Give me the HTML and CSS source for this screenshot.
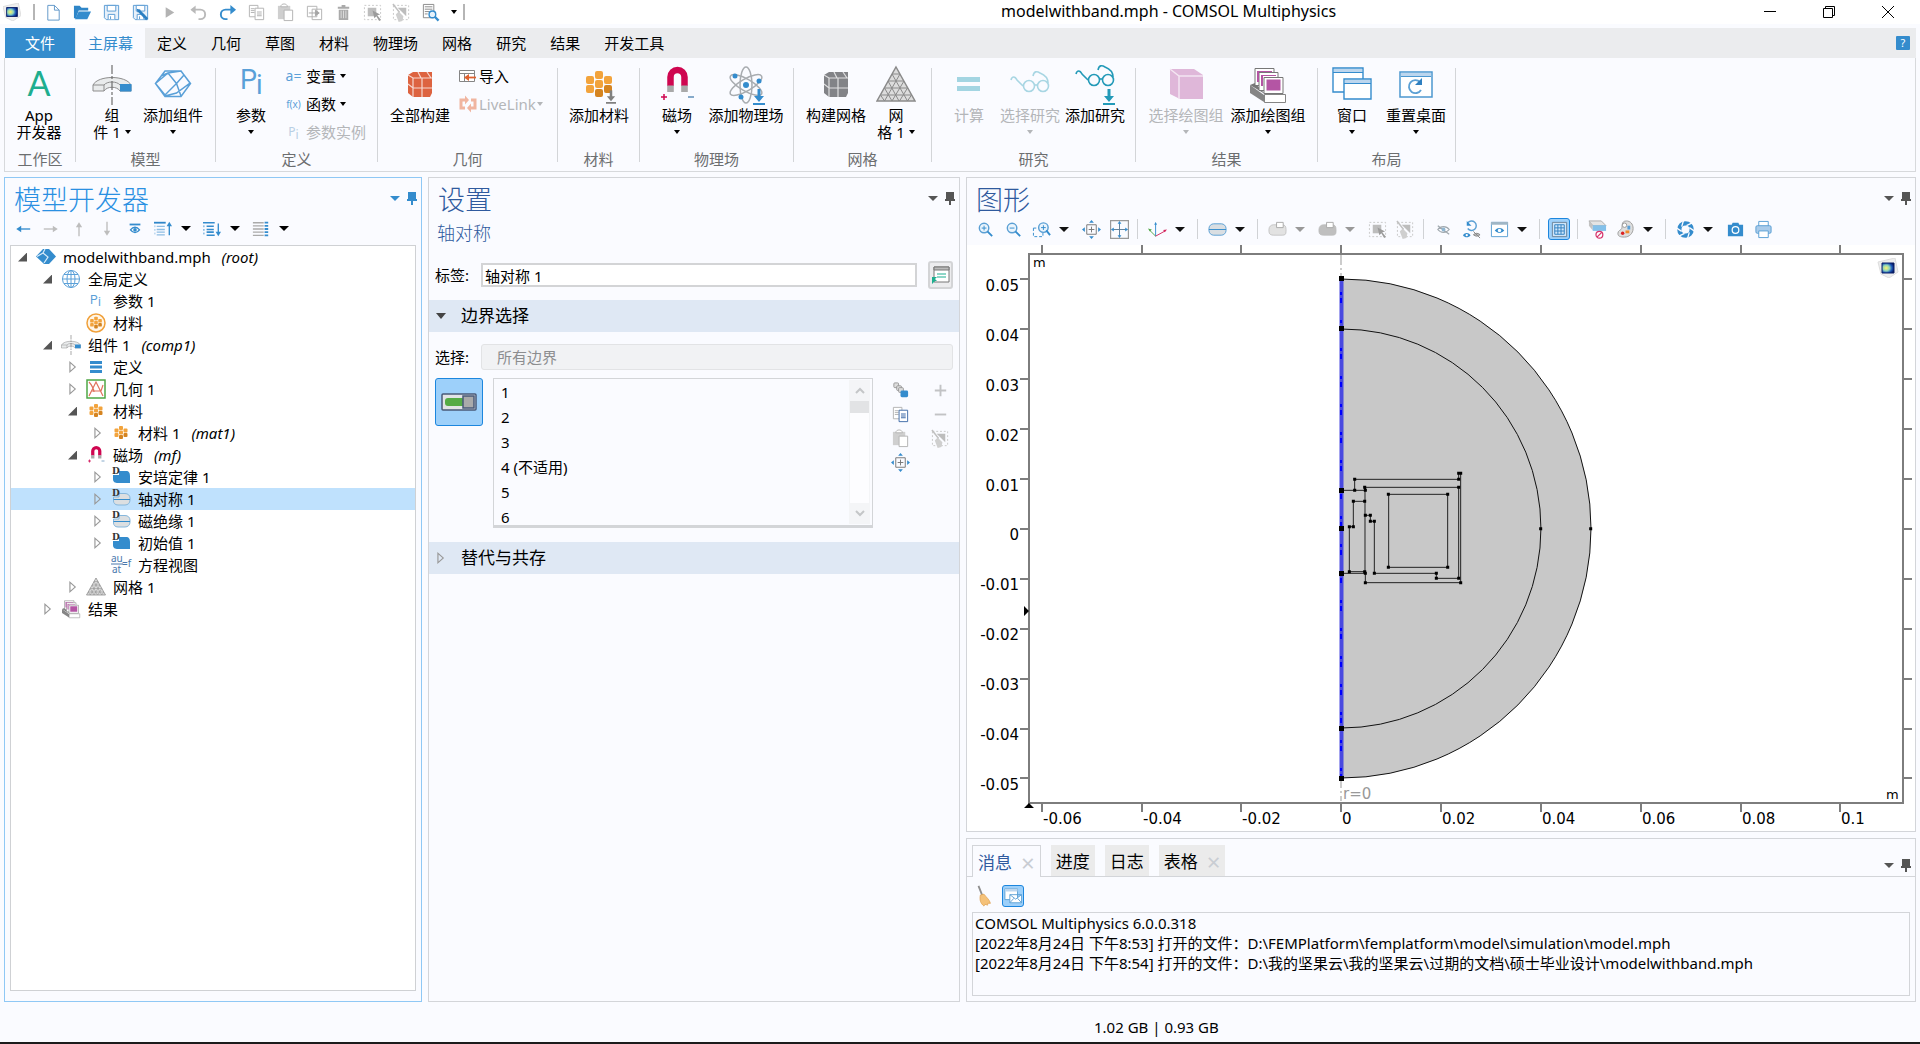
FILE: index.html
```html
<!DOCTYPE html>
<html lang="zh-CN">
<head>
<meta charset="utf-8">
<title>modelwithband.mph - COMSOL Multiphysics</title>
<meta name="viewport" content="width=device-width, initial-scale=1">
<link rel="stylesheet" href="styles.css">
</head>
<body>
<svg class="sprite" aria-hidden="true">
  <defs>
    <radialGradient id="lg" cx=".35" cy=".5" r=".7"><stop offset="0" stop-color="#fff36a"/><stop offset=".4" stop-color="#8fd4b8"/><stop offset=".7" stop-color="#1c56b8"/><stop offset="1" stop-color="#04145c"/></radialGradient>
  </defs>
  <symbol id="logo" viewBox="0 0 20 20"><path d="M0 4l17-4 3 14-9 6-8-4z" fill="#eee" stroke="#ddd"/><path d="M4 5h12v10H4z" fill="url(#lg)" stroke="#0a1f66"/></symbol>
  <symbol id="new" viewBox="0 0 20 20"><path d="M4 2.500h7l5 5v10.500h-12zM11 2.500v5h5" fill="#fff" stroke="#5f97c8"/></symbol>
  <symbol id="open" viewBox="0 0 20 20"><path d="M1 3h6l2 2h7v3H6L3 16H1z" fill="#2f86c8"/><path d="M6 9h13l-4 8H2z" fill="#348ccd"/></symbol>
  <symbol id="save" viewBox="0 0 20 20"><path d="M2.500 2.500h15v15H4.500l-2-2z" fill="#e8f1fa" stroke="#5a9bd4"/><path d="M5.500 2.500h9v6h-9zM6.500 17v-5h7v5M9 14v3" fill="#fff" stroke="#5a9bd4"/></symbol>
  <symbol id="saveas" viewBox="0 0 20 20"><use href="#save"/><path d="M8 8l9 9" stroke="#2b7fc2" stroke-width="3"/><path d="M6 6l4 1-3 3z" fill="#2b7fc2"/></symbol>
  <symbol id="play" viewBox="0 0 20 20"><path d="M6 4.500l9 5.500-9 5.500z" fill="#b3b3b3"/></symbol>
  <symbol id="undo" viewBox="0 0 20 20"><path d="M3 7h9a5 5 0 010 10H10" fill="none" stroke="#b9b9b9" stroke-width="2"/><path d="M7 2.500v9L1.500 7z" fill="#b9b9b9"/></symbol>
  <symbol id="redo" viewBox="0 0 20 20"><path d="M17 7H8a5 5 0 000 10h2" fill="none" stroke="#348ccd" stroke-width="2"/><path d="M13 2v10l6-5z" fill="#348ccd"/></symbol>
  <symbol id="copy" viewBox="0 0 20 20"><path d="M2.500 2.500h9v12h-9z" fill="#fff" stroke="#b3b3b3"/><path d="M4 6h4M4 8h4M4 10h4" stroke="#b3b3b3"/><path d="M8.500 5.500h9v12h-9z" fill="#fff" stroke="currentColor"/><path d="M10.500 9h5v1h-5zM10.500 11h5v1h-5zM10.500 13h5v1h-5z" fill="currentColor"/></symbol>
  <symbol id="paste" viewBox="0 0 20 20"><path d="M2 3h13v14H2z" fill="#cfcfcf"/><path d="M5 4c0-4 7-4 7 0z" fill="#fff" stroke="#b3b3b3"/><path d="M8.500 7.500h9v11h-9z" fill="#fff" stroke="#b3b3b3"/></symbol>
  <symbol id="dup" viewBox="0 0 20 20"><path d="M2.500 3.500h10v11h-10zM7.500 6.500h10v11h-10z" fill="#fff" stroke="#b3b3b3"/><path d="M4 10.500h9M11 7.500l4 3-4 3z" fill="#a5a5a5" stroke="#a5a5a5"/></symbol>
  <symbol id="del" viewBox="0 0 20 20"><path d="M4 4h12v2H4zM8 2h4v2H8zM5 7h10v11H5z" fill="#aaa"/><path d="M7.500 8v8M10 8v8M12.500 8v8" stroke="#ddd"/></symbol>
  <symbol id="sel" viewBox="0 0 20 20"><path d="M1.500 2.500h17v15h-17z" fill="none" stroke="#c8c8c8" stroke-dasharray="2 2"/><path d="M5 5h9v9H5z" fill="#bdbdbd"/><path d="M10 8l8 4-3 1 4 5-2 1-3-5-2 2z" fill="#9c9c9c"/></symbol>
  <symbol id="clr" viewBox="0 0 20 20"><path d="M1.500 2.500h16v15h-16z" fill="none" stroke="#c8c8c8" stroke-dasharray="2 2"/><path d="M6 5h9v9z" fill="#bdbdbd"/><path d="M1 1l7 9" stroke="#c0c0c0" stroke-width="1.500"/><path d="M7 9l5 5-1 5-4 1-3-8z" fill="#cfcfcf"/></symbol>
  <symbol id="find" viewBox="0 0 20 20"><path d="M2.500 1.500h11v14h-11z" fill="#fff" stroke="#8a8a8a"/><path d="M4 4h8M4 6.500h8M4 9h5M4 11.500h3" stroke="#8a8a8a"/><circle cx="12" cy="12" r="3.500" fill="#e6f2fb" stroke="#348ccd" stroke-width="1.500"/><path d="M14.500 14.500l4 4" stroke="#348ccd" stroke-width="2.500"/></symbol>
  <symbol id="pin" viewBox="0 0 12 14"><path d="M2 1h8v7h1v2H7v4H5v-4H1V8h1z" fill="currentColor"/></symbol>

  <symbol id="comp" viewBox="0 0 40 40"><path d="M1 26v-6C6 10 34 10 39 20v6H28c-3-5-13-5-16 0z" fill="#e9ebec" stroke="#8d8d8d"/><path d="M1 20h11c3-4 13-4 16 0M12 20v6" fill="none" stroke="#8d8d8d"/><path d="M28 19h11.500v7.500H28z" fill="#348ccd"/><path d="M20 0v40" stroke="#6e6e6e" stroke-width="1.200" stroke-dasharray="9 2 3 2"/></symbol>
  <symbol id="cubeo" viewBox="0 0 40 40"><path d="M2.500 18.500L12 6h16l9.500 12.500L28 31.500H12zM2.500 18.500L12 30L23.500 18.500L15 8zM15 8L28 6M23.500 18.500L28 31M28 6L37 18L23.500 28L12 31M15 8L8 11M23.500 18.500L31 10" fill="none" stroke="#5aa0d8" stroke-width="1.500"/></symbol>
  <symbol id="cube" viewBox="0 0 40 40"><path d="M8 10l5-3h19v21l-2 4H13l-5-4z" fill="currentColor"/><path d="M8 10l5 3h19M13 13v19M8 19l5 4h19M22 13v19M18 7l3 6M27 7l4 6" fill="none" stroke="#fff" stroke-opacity=".75" stroke-width="1.200"/></symbol>
  <symbol id="mat" viewBox="0 0 40 40"><g fill="#f2a33c"><rect x="7" y="11" width="8" height="8" rx="2"/><rect x="16" y="6" width="8" height="8" rx="2"/><rect x="25" y="11" width="8" height="8" rx="2"/><rect x="7" y="20" width="8" height="8" rx="2"/><rect x="16" y="15" width="8" height="8" rx="2"/></g><g fill="#d58420"><rect x="16" y="24" width="8" height="8" rx="2"/><rect x="25" y="20" width="8" height="8" rx="2"/></g></symbol>
  <symbol id="down" viewBox="0 0 12 16"><path d="M6 0v9" stroke="currentColor" stroke-width="3"/><path d="M1 7h10l-5 6zM0 14h12v2H0z" fill="currentColor"/></symbol>
  <symbol id="mag" viewBox="0 0 40 40"><path d="M13.500 21V12a7 7 0 0114 0v9" fill="none" stroke="#cf0650" stroke-width="6.500"/><path d="M10.200 20.500h6.600V27h-6.600zM24.200 20.500h6.600V27h-6.600z" fill="#a9a9a9"/><path d="M4 32h6M7 29v6" stroke="#cf0650" stroke-width="1.500"/><path d="M31 32h6" stroke="#5f8fb8" stroke-width="1.500"/></symbol>
  <symbol id="atom" viewBox="0 0 40 40"><g fill="none" stroke="#a8acb0" stroke-width="1.500"><ellipse cx="20" cy="20" rx="6" ry="18"/><ellipse cx="20" cy="20" rx="6" ry="18" transform="rotate(60 20 20)"/><ellipse cx="20" cy="20" rx="6" ry="18" transform="rotate(120 20 20)"/></g><g fill="#348ccd"><circle cx="20" cy="20" r="3"/><circle cx="9" cy="11" r="2.500"/><circle cx="33" cy="16" r="2.500"/><circle cx="15" cy="32" r="2.500"/></g></symbol>
  <symbol id="tri" viewBox="0 0 40 40"><path d="M20 2L39 36H1z" fill="#dcdcdc" stroke="#8a8a8a" stroke-width="1.500"/><path d="M16 9h8M12 16h16M8.500 23h23M4.500 30h31M16 9l15.500 27M12 16l11 20M8.500 23L16 36M4.500 30l4 6M24 9L8.500 36M28 16L16 36M31.500 23l-8 13M35.500 30l-4 6" fill="none" stroke="#8a8a8a" stroke-width="1"/></symbol>
  <symbol id="eq" viewBox="0 0 40 40"><path d="M8 12h23v5H8zM8 21h23v5H8z" fill="#a3d5e2"/></symbol>
  <symbol id="glass" viewBox="0 0 40 40"><g fill="none" stroke="currentColor" stroke-width="1.600"><path d="M1 12c1-4 4-4 6 0l6 6M23 8c1-5 4-5 7-3 5 2 8 5 8 10"/><circle cx="19" cy="18" r="5.500"/><circle cx="33" cy="18" r="5.500"/><path d="M24.500 17h3"/></g></symbol>
  <symbol id="box" viewBox="0 0 40 40"><path d="M4 4h24l9 6v24H14L4 29z" fill="#dfb7d9"/><path d="M4 4l9 7h24M13 11v23" fill="none" stroke="#f4e6f2" stroke-width="1.500"/></symbol>
  <symbol id="plots" viewBox="0 0 40 40"><path d="M2 20l14 10v7L2 28z" fill="#858585"/><path d="M2 20l5-2 10 11z" fill="#777"/><g stroke="#777" fill="#fff"><path d="M7 3.500h19v17H7z"/><path d="M11 7.500h19v18H11z"/><path d="M16 12.500h19v16H16z"/></g><path d="M9 6h15v1H11v10H9zM13 10h15v1H15v10h-2zM18.500 14.500h14v11h-14z" fill="#b455a4"/><path d="M16.500 29.500h21v8h-21z" fill="#fff" stroke="#858585"/></symbol>
  <symbol id="wins" viewBox="0 0 40 40"><g fill="#fff" stroke="#348ccd" stroke-width="1.400"><path d="M1 3h30v24H1z"/><path d="M12 14h27v20H12z"/></g><path d="M2 4h28v3H2zM13 15h25v3H13z" fill="#bcd6ee"/><path d="M1 7.500h30M12 18.500h27" stroke="#348ccd"/></symbol>
  <symbol id="reset" viewBox="0 0 40 40"><path d="M4 7h32v25H4z" fill="#fff" stroke="#4c98d0" stroke-width="1.500"/><path d="M5 8h30v3H5z" fill="#bcd6ee"/><path d="M5 11.500h30" stroke="#4c98d0"/><path d="M25 25a6.500 6.500 0 11-1-8" fill="none" stroke="#5a9fd4" stroke-width="1.800"/><path d="M26 13v7h-7z" fill="#2f80c0"/></symbol>
  <symbol id="import" viewBox="0 0 20 20"><path d="M1.500 4.500h15v11h-15zM1.500 7.500h15M6.500 7v8" fill="#fff" stroke="#858585"/><path d="M9 11.500h9" stroke="#e0622f" stroke-width="1.800"/><path d="M11 8v7l-5-3.500z" fill="#e0622f"/></symbol>
  <symbol id="link" viewBox="0 0 20 20"><path d="M8 6H3v8h4M12 14h5V6h-4" fill="none" stroke="#f0b5a0" stroke-width="3"/><path d="M7 1.500v9L11 6zM13 9.500v9L9 14z" fill="#f0b5a0"/></symbol>

  <symbol id="left" viewBox="0 0 20 20"><path d="M5 10h13" stroke="currentColor" stroke-width="1.500"/><path d="M8 6.500v7L2.500 10z" fill="currentColor"/></symbol>
  <symbol id="eye" viewBox="0 0 20 20"><path d="M4 5h12" stroke="#348ccd" stroke-width="2"/><path d="M5 11c3-4 7-4 10 0-3 4-7 4-10 0z" fill="#fff" stroke="#348ccd" stroke-width="1.500"/><circle cx="10" cy="11" r="2" fill="#348ccd"/></symbol>
  <symbol id="expand" viewBox="0 0 20 20"><path d="M0 3h13" stroke="#2f86c8" stroke-width="2"/><path d="M3 7h9M3 10.500h9M3 13.500h9M3 16.500h9" stroke="#8dbde3" stroke-width="1.500"/><path d="M1 6v12" stroke="#8dbde3" stroke-dasharray="2 2"/><path d="M17 5v12" stroke="#348ccd" stroke-width="1.500"/><path d="M14 7l3-5 3 5z" fill="#348ccd"/></symbol>
  <symbol id="coll" viewBox="0 0 20 20"><path d="M0 3h13M4 7h8M4 10.500h8M4 13.500h8M4 17h9" stroke="#348ccd" stroke-width="1.800"/><path d="M1 6v12" stroke="#348ccd" stroke-dasharray="2 2"/><path d="M17 4v11" stroke="#348ccd" stroke-width="1.500"/><path d="M14 13l3 5 3-5z" fill="#348ccd"/></symbol>
  <symbol id="cols" viewBox="0 0 20 20"><path d="M1 3h12M1 6.500h12M1 10h12M1 13.500h12M1 17h12" stroke="#aaa" stroke-width="1.500"/><path d="M14 3h4M14 6.500h4M14 10h4M14 13.500h4M14 17h4" stroke="#348ccd" stroke-width="2"/></symbol>

  <symbol id="root" viewBox="0 0 20 20"><path d="M0 9.500L7 2h6l7 7.500L13 17H8z" fill="#348ccd"/><path d="M1 9.500l6-3.500 5 4-4 6M7 6l2-4" fill="none" stroke="#d9ecfa" stroke-width="1.200"/></symbol>
  <symbol id="globe" viewBox="0 0 20 20"><g fill="none" stroke="#5aa0d8"><circle cx="10" cy="10" r="8.500"/><ellipse cx="10" cy="10" rx="4" ry="8.500"/><path d="M1.500 10h17M10 1.500v17M3 5.500h14M3 14.500h14"/></g></symbol>
  <symbol id="matc" viewBox="0 0 20 20"><circle cx="10" cy="10" r="9" fill="#fff6e8" stroke="#f0a03a" stroke-width="1.500"/><use href="#mat" x="1" y="1" width="18" height="18"/></symbol>
  <symbol id="defs" viewBox="0 0 20 20"><path d="M4 4h12v3H4zM4 8.500h12v3H4zM4 13h12v3H4z" fill="#348ccd"/></symbol>
  <symbol id="geom" viewBox="0 0 20 20"><path d="M1 1h18v18H1z" fill="#fff" stroke="#4fa845" stroke-width="1.500"/><path d="M3 3c3 3 5 8 5 10M3 17L10 3l7 14M5 12h10l2-6" fill="none" stroke="#e0705c" stroke-width="1.200"/></symbol>
  <symbol id="dom" viewBox="0 0 20 20"><path d="M2 8h6V4h7c3 0 4 2 4 5v7H7c-3 0-5-1-5-4z" fill="#348ccd"/></symbol>
  <symbol id="bnd" viewBox="0 0 20 20"><path d="M2.500 8H8V4.500h6c3 0 5 2 5 4.500v2c0 3-2 5-5 5H7c-3 0-4.500-2-4.500-4z" fill="#dcdfe1" stroke="#86b7dc"/><path d="M2.500 10.500H19" stroke="#348ccd"/></symbol>

  <symbol id="zin" viewBox="0 0 20 20"><circle cx="8.500" cy="8.500" r="5" fill="#eaf4fc" stroke="#5a9fd4" stroke-width="1.500"/><path d="M12 12l5 5" stroke="#348ccd" stroke-width="2"/><path d="M6 8.500h5M8.500 6v5" stroke="#348ccd"/></symbol>
  <symbol id="zout" viewBox="0 0 20 20"><circle cx="8.500" cy="8.500" r="5" fill="#eaf4fc" stroke="#5a9fd4" stroke-width="1.500"/><path d="M12 12l5 5" stroke="#348ccd" stroke-width="2"/><path d="M6 8.500h5" stroke="#348ccd"/></symbol>
  <symbol id="zbox" viewBox="0 0 20 20"><path d="M1.500 8.500h10v9h-10z" fill="none" stroke="#348ccd" stroke-dasharray="3 2"/><circle cx="12" cy="8" r="5" fill="#eaf4fc" stroke="#5a9fd4" stroke-width="1.500"/><path d="M15 11l4 5" stroke="#348ccd" stroke-width="2"/><path d="M9.500 8h5M12 5.500v5" stroke="#348ccd"/></symbol>
  <symbol id="fit" viewBox="0 0 20 20"><path d="M5 5h10v10H5zM7 10h6M10 7v6" fill="none" stroke="#777"/><path d="M7.500 3L10 0 12.500 3zM7.500 17l2.500 3 2.500-3zM3 7.500L0 10 3 12.500zM17 7.500l3 2.500-3 2.500z" fill="#348ccd"/></symbol>
  <symbol id="ext" viewBox="0 0 20 20"><path d="M.5.5h19v19H.5z" fill="none" stroke="#999" stroke-width="1.500"/><path d="M2 10h16M10 2v16" stroke="#5c7c98"/><path d="M8 4l2-3 2 3zM8 16l2 3 2-3zM4 8l-3 2 3 2zM16 8l3 2-3 2z" fill="#348ccd"/></symbol>
  <symbol id="axes" viewBox="0 0 20 20"><path d="M8 17V3" stroke="#348ccd"/><path d="M8 17L1 10" stroke="#51a747"/><path d="M8 17l11-6" stroke="#d4275e"/><path d="M6.500 5L8 2l1.500 3z" fill="#348ccd"/><path d="M0 9l4 1-2 2z" fill="#51a747"/><path d="M20 10l-4 .5 1.500 2.500z" fill="#d4275e"/></symbol>
  <symbol id="slab" viewBox="0 0 20 20"><rect x="1" y="4" width="18" height="12" rx="5" fill="#d9dee2" stroke="#5a9fd4"/><path d="M1 10h18" stroke="#348ccd"/></symbol>
  <symbol id="prt" viewBox="0 0 20 20"><path d="M1 10c0-3 2-5 5-5h9c3 0 4 2 4 5v2c0 3-1 4-4 4H6c-3 0-5-1-5-4z" fill="currentColor" stroke="#bbb" stroke-width=".8"/><path d="M9 2.500h7V8H9z" fill="#fff" stroke="#aaa"/></symbol>
  <symbol id="hide" viewBox="0 0 20 20"><path d="M4 10c3-4 9-4 12 0-3 4-9 4-12 0zM4 6l12 9" fill="none" stroke="#a0a8ae" stroke-width="1.300"/><circle cx="10" cy="10" r="2" fill="#8fb5d0"/></symbol>
  <symbol id="rst" viewBox="0 0 20 20"><path d="M6 3a5 5 0 110 6" fill="none" stroke="#5a9fd4" stroke-width="1.500"/><path d="M5 1v5h5z" fill="#348ccd"/><path d="M1 16c2-3 6-3 8 0-2 3-6 3-8 0z" fill="#348ccd"/><circle cx="5" cy="16" r="1.200" fill="#fff"/><path d="M12 15.500c2-2 5-2 7 0-2 2-5 2-7 0zM12 12l7 7" fill="#bbb" stroke="#888"/></symbol>
  <symbol id="vis" viewBox="0 0 20 20"><path d="M1.500 2.500h17v15h-17z" fill="#fff" stroke="#5a9fd4"/><path d="M1 2h18v3H1z" fill="#9fb6c6"/><path d="M5 11c3-3.500 7-3.500 10 0-3 3.500-7 3.500-10 0z" fill="#348ccd"/><circle cx="10" cy="11" r="1.800" fill="#fff"/></symbol>
  <symbol id="grid" viewBox="0 0 20 20"><path d="M2.500 2.500h15v15h-15z" fill="#cfe6fa" stroke="#6c8499"/><path d="M5 5h10v10H5zM8.300 5v10M11.600 5v10M5 8.300h10M5 11.600h10" fill="none" stroke="#2f80c0"/></symbol>
  <symbol id="trans" viewBox="0 0 20 20"><path d="M1 1h13l5 5H5z" fill="#e4e4e4" stroke="#aaa"/><path d="M1 1l4 4v6L1 6z" fill="#c3c3c3"/><path d="M5 5.500h14v6H5z" fill="#83c0ea"/><circle cx="12" cy="15.500" r="3.600" fill="#fff" stroke="#d6336c" stroke-width="1.300"/><path d="M9.500 18l5-5" stroke="#d6336c" stroke-width="1.300"/></symbol>
  <symbol id="pal" viewBox="0 0 20 20"><path d="M11 1c4 0 7 3 7 8s-4 9-9 9-7-1-7-4 3-3 4-5-1-8 5-8z" fill="#dedede" stroke="#9c9c9c"/><circle cx="9" cy="5.500" r="2.300" fill="#fff" stroke="#999"/><path d="M12 6h3v4h-3z" fill="#5aa0d8"/><path d="M10 11h4v3h-4z" fill="#f08a2c"/><circle cx="7" cy="14" r="1.800" fill="#d22"/></symbol>
  <symbol id="shut" viewBox="0 0 20 20"><circle cx="10" cy="10" r="6.500" fill="none" stroke="#348ccd" stroke-width="4.500"/><path d="M8 0l-2 7M17 3l-6 3M20 12l-6-4M12 20l2-7M3 17l6-3M0 8l6 4" stroke="#fafbff" stroke-width="1.400"/></symbol>
  <symbol id="cam" viewBox="0 0 20 20"><path d="M2 5h4l1-2h6l1 2h4v12H2z" fill="#348ccd"/><circle cx="10" cy="10.500" r="3.500" fill="none" stroke="#fff" stroke-width="1.300"/></symbol>
  <symbol id="print" viewBox="0 0 20 20"><path d="M5 1.500h10V7H5z" fill="#fff" stroke="#5a9fd4"/><rect x="2" y="6" width="16" height="8" rx="1.500" fill="#a9cbea" stroke="#5a9fd4"/><path d="M5 11.500h10v7H5z" fill="#fff" stroke="#5a9fd4"/></symbol>

  <symbol id="report" viewBox="0 0 20 20"><path d="M3 2h15v15H3z" fill="#fff" stroke="#777"/><path d="M3 2h15v3H3z" fill="#bbb" stroke="#777"/><path d="M6 9h9M6 12h9" stroke="#1fae8f" stroke-width="1.200"/><path d="M1 19v-7h5L4 14l2 2-2 0z" fill="#1fae8f"/></symbol>
  <symbol id="switch" viewBox="0 0 36 20"><rect x="1" y="2" width="34" height="16" rx="1" fill="#e1e4e6" stroke="#4a5a78" stroke-width="1.500"/><rect x="4" y="6" width="20" height="8" rx="3" fill="#55ab45"/><rect x="22" y="4" width="11" height="12" fill="#aaa" stroke="#4a5a78" stroke-width="1.500"/></symbol>
  <symbol id="chain" viewBox="0 0 20 20"><g fill="#ddd" stroke="#999"><rect x="3" y="2" width="5" height="5" rx="1"/><rect x="6" y="5" width="5" height="5" rx="1"/><rect x="8" y="7" width="5" height="5" rx="1"/></g><rect x="10" y="10" width="8" height="7" rx="1.500" fill="#348ccd"/></symbol>
  <symbol id="broom" viewBox="0 0 20 24"><path d="M4 1l4 10" stroke="#8f8f8f" stroke-width="2"/><path d="M6 11l4-1c3 4 6 6 7 10l-3 0 0 2-3-1-1 2c-4-3-5-7-4-12z" fill="#f5c27a" stroke="#e0a050" stroke-width=".8"/></symbol>
  <symbol id="mail" viewBox="0 0 20 20"><path d="M1 2h14v12H1z" fill="#fff" stroke="#5a9fd4"/><path d="M1 2h14v3H1z" fill="#bcd6ee"/><path d="M6.500 8.500h13v9h-13zM6.500 8.500l6.500 5 6.500-5M6.500 17.500l4.500-5M19.500 17.500l-4.500-5" fill="#fff" stroke="#5a9fd4"/></symbol>
</svg>

<header class="titlebar">
  <svg class="logo"><use href="#logo"/></svg>
  <span class="tsep"></span>
  <div class="quick">
    <button aria-label="新建"><svg><use href="#new"/></svg></button>
    <button aria-label="打开"><svg><use href="#open"/></svg></button>
    <button aria-label="保存"><svg><use href="#save"/></svg></button>
    <button aria-label="另存为"><svg><use href="#saveas"/></svg></button>
    <button aria-label="运行"><svg><use href="#play"/></svg></button>
    <button aria-label="撤消"><svg><use href="#undo"/></svg></button>
    <button aria-label="重做"><svg><use href="#redo"/></svg></button>
    <button aria-label="复制"><svg><use href="#copy"/></svg></button>
    <button aria-label="粘贴"><svg><use href="#paste"/></svg></button>
    <button aria-label="生成副本"><svg><use href="#dup"/></svg></button>
    <button aria-label="删除"><svg><use href="#del"/></svg></button>
    <button aria-label="选择"><svg><use href="#sel"/></svg></button>
    <button aria-label="清除选择"><svg><use href="#clr"/></svg></button>
    <button aria-label="查找"><svg><use href="#find"/></svg></button>
    <button class="more" aria-label="更多"><i class="caret"></i></button>
  </div>
  <span class="tsep"></span>
  <h1>modelwithband.mph - COMSOL Multiphysics</h1>
  <div class="winctl">
    <button aria-label="最小化"><svg viewBox="0 0 14 14"><path d="M1 6.500h12"/></svg></button>
    <button aria-label="还原"><svg viewBox="0 0 14 14"><path d="M1.500 3.500h9v9h-9zM3.500 3.500v-2h9v9h-2"/></svg></button>
    <button aria-label="关闭"><svg viewBox="0 0 14 14"><path d="M1 1l12 12M13 1L1 13"/></svg></button>
  </div>
</header>

<nav class="tabs">
  <a class="file" href="#">文件</a><a class="on" href="#">主屏幕</a><a href="#">定义</a><a href="#">几何</a><a href="#">草图</a><a href="#">材料</a><a href="#">物理场</a><a href="#">网格</a><a href="#">研究</a><a href="#">结果</a><a href="#">开发工具</a>
  <button class="help" aria-label="帮助">?</button>
</nav>

<section class="ribbon">
  <div class="group g-app"><div class="tools"><button class="big"><svg><text x="20" y="31" text-anchor="middle" class="ic-a">A</text></svg>App<br>开发器</button></div><p>工作区</p></div><i class="sep"></i>
  <div class="group g-model"><div class="tools"><button class="big"><svg><use href="#comp"/></svg>组<br><span class="nb">件 1 <i class="caret"></i></span></button><button class="big w62"><svg><use href="#cubeo"/></svg>添加组件<br><i class="caret"></i></button></div><p>模型</p></div><i class="sep"></i>
  <div class="group g-def"><div class="tools"><button class="big"><svg><text x="9" y="24" class="ic-p">P</text><text x="25" y="29" class="ic-p">i</text></svg>参数<br><i class="caret"></i></button>
    <div class="list"><button><b class="gl">a=</b>变量 <i class="caret"></i></button><button><b class="gl fx">f(x)</b>函数 <i class="caret"></i></button><button disabled><b class="gl"><span>P</span><sub>i</sub></b>参数实例</button></div></div><p>定义</p></div><i class="sep"></i>
  <div class="group g-geo"><div class="tools"><button class="big"><svg class="orange"><use href="#cube"/></svg>全部构建</button>
    <div class="list imp"><button><svg><use href="#import"/></svg>导入</button><button disabled><svg><use href="#link"/></svg>LiveLink <i class="caret"></i></button></div></div><p>几何</p></div><i class="sep"></i>
  <div class="group g-mat"><div class="tools"><button class="big"><svg><use href="#mat"/><use href="#down" class="c-gray" x="27" y="25" width="10" height="14"/></svg>添加材料</button></div><p>材料</p></div><i class="sep"></i>
  <div class="group g-phy"><div class="tools"><button class="big"><svg><use href="#mag"/></svg>磁场<br><i class="caret"></i></button><button class="big w78"><svg><use href="#atom"/><use href="#down" class="c-blue" x="27" y="24" width="12" height="16"/></svg>添加物理场</button></div><p>物理场</p></div><i class="sep"></i>
  <div class="group g-mesh"><div class="tools"><button class="big"><svg class="gray"><use href="#cube"/></svg>构建网格</button><button class="big"><svg><use href="#tri"/></svg>网<br><span class="nb">格 1 <i class="caret"></i></span></button></div><p>网格</p></div><i class="sep"></i>
  <div class="group g-study"><div class="tools"><button class="big" disabled><svg><use href="#eq"/></svg>计算</button><button class="big w62" disabled><svg class="c-pale"><use href="#glass" y="3"/></svg>选择研究<br><i class="caret"></i></button><button class="big w68"><svg class="c-teal"><use href="#glass" y="-3"/><use href="#down" x="28" y="24" width="12" height="16"/></svg>添加研究</button></div><p>研究</p></div><i class="sep"></i>
  <div class="group g-res"><div class="tools"><button class="big w78" disabled><svg><use href="#box"/></svg>选择绘图组<br><i class="caret"></i></button><button class="big w78"><svg><use href="#plots"/></svg>添加绘图组<br><i class="caret"></i></button></div><p>结果</p></div><i class="sep"></i>
  <div class="group g-lay"><div class="tools"><button class="big"><svg><use href="#wins"/></svg>窗口<br><i class="caret"></i></button><button class="big w68"><svg><use href="#reset"/></svg>重置桌面<br><i class="caret"></i></button></div><p>布局</p></div><i class="sep"></i>
</section>

<main>
  <section class="panel model">
    <header><h2>模型开发器</h2><span class="pins"><i class="caret lg"></i><svg><use href="#pin"/></svg></span></header>
    <div class="mtools">
      <button aria-label="后退" class="c-blue"><svg><use href="#left"/></svg></button>
      <button aria-label="前进" class="c-lt"><svg class="r180"><use href="#left"/></svg></button>
      <button aria-label="上移" class="c-lt"><svg class="r90"><use href="#left"/></svg></button>
      <button aria-label="下移" class="c-lt"><svg class="r270"><use href="#left"/></svg></button>
      <button aria-label="显示"><svg><use href="#eye"/></svg></button>
      <button aria-label="展开"><svg><use href="#expand"/></svg></button><button class="dd" aria-label="展开选项"><i class="caret lg"></i></button>
      <button aria-label="折叠"><svg><use href="#coll"/></svg></button><button class="dd" aria-label="折叠选项"><i class="caret lg"></i></button>
      <button aria-label="列"><svg><use href="#cols"/></svg></button><button class="dd" aria-label="列选项"><i class="caret lg"></i></button>
    </div>
    <ul class="tree">
      <li class="l0"><i class="ar open"></i><svg><use href="#root"/></svg>modelwithband.mph <em>(root)</em></li>
      <li class="l1"><i class="ar open"></i><svg><use href="#globe"/></svg>全局定义</li>
      <li class="l2"><i class="ar"></i><svg><text x="4" y="13" class="ic-s">P</text><text x="12" y="15" class="ic-s">i</text></svg>参数 1</li>
      <li class="l2"><i class="ar"></i><svg><use href="#matc"/></svg>材料</li>
      <li class="l1"><i class="ar open"></i><svg><use href="#comp"/></svg>组件 1 <em>(comp1)</em></li>
      <li class="l2"><i class="ar shut"></i><svg><use href="#defs"/></svg>定义</li>
      <li class="l2"><i class="ar shut"></i><svg><use href="#geom"/></svg>几何 1</li>
      <li class="l2"><i class="ar open"></i><svg><use href="#mat"/></svg>材料</li>
      <li class="l3"><i class="ar shut"></i><svg><use href="#mat"/></svg>材料 1 <em>(mat1)</em></li>
      <li class="l2"><i class="ar open"></i><svg><use href="#mag"/></svg>磁场 <em>(mf)</em></li>
      <li class="l3"><i class="ar shut"></i><svg><use href="#dom"/><text x="1" y="7" class="ic-d">D</text></svg>安培定律 1</li>
      <li class="l3 on"><i class="ar shut"></i><svg><use href="#bnd"/><text x="1" y="7" class="ic-d">D</text></svg>轴对称 1</li>
      <li class="l3"><i class="ar shut"></i><svg><use href="#bnd"/><text x="1" y="7" class="ic-d">D</text></svg>磁绝缘 1</li>
      <li class="l3"><i class="ar shut"></i><svg><use href="#dom"/><text x="1" y="7" class="ic-d">D</text></svg>初始值 1</li>
      <li class="l3"><i class="ar"></i><svg><text x="0" y="7" class="ic-e">au</text><path d="M0 9h12" stroke="#4a78ad"/><text x="1" y="18" class="ic-e">at</text><text x="11" y="12" class="ic-e">=f</text></svg>方程视图</li>
      <li class="l2"><i class="ar shut"></i><svg><use href="#tri"/></svg>网格 1</li>
      <li class="l1"><i class="ar shut"></i><svg><use href="#plots"/></svg>结果</li>
    </ul>
  </section>

  <section class="panel settings">
    <header><h2>设置</h2><span class="pins"><i class="caret lg"></i><svg><use href="#pin"/></svg></span></header>
    <h3>轴对称</h3>
    <div class="row name"><label for="lab">标签:</label><input id="lab" type="text" value="轴对称 1"><button class="rep" aria-label="创建"><svg><use href="#report"/></svg></button></div>
    <h4><i class="fold"></i>边界选择</h4>
    <div class="row pick"><label for="bsel">选择:</label><select id="bsel" disabled><option>所有边界</option></select></div>
    <div class="bounds">
      <button class="toggle" aria-label="激活选择" aria-pressed="true"><svg><use href="#switch"/></svg></button>
      <div class="listbox">
        <ul><li>1</li><li>2</li><li>3</li><li>4 (不适用)</li><li>5</li><li>6</li></ul>
        <div class="sbar"><button aria-label="向上滚动"><svg viewBox="0 0 10 6"><path d="M1 5l4-4 4 4"/></svg></button><i class="thumb"></i><button aria-label="向下滚动"><svg viewBox="0 0 10 6"><path d="M1 1l4 4 4-4"/></svg></button></div>
      </div>
      <div class="acts">
        <button aria-label="创建选择"><svg><use href="#chain"/></svg></button><button class="sym" aria-label="添加"><svg viewBox="0 0 20 20"><path d="M4 10h12M10 4v12"/></svg></button>
        <button class="navy" aria-label="复制选择"><svg><use href="#copy"/></svg></button><button class="sym" aria-label="移除"><svg viewBox="0 0 20 20"><path d="M4 10h12"/></svg></button>
        <button aria-label="粘贴选择"><svg><use href="#paste"/></svg></button><button aria-label="清除"><svg><use href="#clr"/></svg></button>
        <button aria-label="缩放到选择"><svg><use href="#fit"/></svg></button>
      </div>
    </div>
    <h4><i class="fold side"></i>替代与共存</h4>
  </section>

  <div class="right">
    <section class="panel graphics">
      <header><h2>图形</h2><span class="pins"><i class="caret lg"></i><svg><use href="#pin"/></svg></span></header>
      <div class="gtools">
        <button aria-label="放大"><svg><use href="#zin"/></svg></button><button aria-label="缩小"><svg><use href="#zout"/></svg></button><button aria-label="框选缩放"><svg><use href="#zbox"/></svg></button><button class="dd" aria-label="缩放选项"><i class="caret lg"></i></button>
        <button aria-label="缩放到选择"><svg><use href="#fit"/></svg></button><button aria-label="缩放到窗口大小"><svg><use href="#ext"/></svg></button><i class="gs"></i>
        <button aria-label="视图"><svg><use href="#axes"/></svg></button><button class="dd" aria-label="视图选项"><i class="caret lg"></i></button><i class="gs"></i>
        <button aria-label="选择边界"><svg><use href="#slab"/></svg></button><button class="dd" aria-label="选择选项"><i class="caret lg"></i></button><i class="gs"></i>
        <button class="c-pr1" aria-label="框选"><svg><use href="#prt"/></svg></button><button class="dd off" aria-label="框选选项"><i class="caret lg"></i></button>
        <button class="c-pr2" aria-label="取消框选"><svg><use href="#prt"/></svg></button><button class="dd off" aria-label="取消选项"><i class="caret lg"></i></button>
        <button aria-label="选择"><svg><use href="#sel"/></svg></button><button aria-label="清除"><svg><use href="#clr"/></svg></button><i class="gs"></i>
        <button aria-label="隐藏"><svg><use href="#hide"/></svg></button><button aria-label="重置隐藏"><svg><use href="#rst"/></svg></button><button aria-label="可见性"><svg><use href="#vis"/></svg></button><button class="dd" aria-label="可见性选项"><i class="caret lg"></i></button><i class="gs"></i>
        <button class="pressed" aria-label="网格" aria-pressed="true"><svg><use href="#grid"/></svg></button><i class="gs"></i>
        <button aria-label="透明"><svg><use href="#trans"/></svg></button><button aria-label="颜色"><svg><use href="#pal"/></svg></button><button class="dd" aria-label="颜色选项"><i class="caret lg"></i></button><i class="gs"></i>
        <button aria-label="快照"><svg><use href="#shut"/></svg></button><button class="dd" aria-label="快照选项"><i class="caret lg"></i></button>
        <button aria-label="相机"><svg><use href="#cam"/></svg></button><button aria-label="打印"><svg><use href="#print"/></svg></button>
      </div>
      <div class="plot">
        <svg viewBox="967 245 948 586" role="img" aria-label="几何图">
          <path class="dom" d="M1341.500 279A249.500 249.500 0 011341.500 778z"/>
          <path class="arc" d="M1341.500 279A249.500 249.500 0 011341.500 778M1341.500 329A199.500 199.500 0 011341.500 728"/>
          <path d="M1341 255v26M1341 778v23" stroke="#ccc" stroke-width="2" stroke-dasharray="10 3 2 3"/>
          <g transform="translate(1300 450) scale(.33333)">
            <path class="wire" d="M124 121H196M164 121V88H476V70H482V398H196V370M194 121V112H476V385H409V370H223V214H211V196H196M195 112V370M194 154H160V230H148V365H194M124 370H196M266 133H443V352H266z"/>
            <path class="dots" d="M164 88h.1M164 121h.1M194 112h.1M196 121h.1M476 88h.1M476 70h.1M482 70h.1M476 112h.1M482 398h.1M196 398h.1M476 385h.1M409 385h.1M409 370h.1M223 370h.1M223 214h.1M211 214h.1M211 196h.1M196 196h.1M194 154h.1M160 154h.1M160 230h.1M148 230h.1M148 365h.1M194 365h.1M196 370h.1M265 133h.1M443 133h.1M443 352h.1M265 352h.1M722 236h.1M872 236h.1"/>
          </g>
          <path d="M1341.500 279V778" stroke="#4a4ae0" stroke-width="4"/><path d="M1341 292V778" stroke="#00f" stroke-width="2" stroke-dasharray="3 3 5 17"/>
          <path d="M1339 276h5v5h-5zM1339 326h5v5h-5zM1339 488h5v5h-5zM1339 526h5v5h-5zM1339 571h5v5h-5zM1339 726h5v5h-5zM1339 776h5v5h-5z"/>
          <path class="frame" d="M1029 254H1903V803H1029z"/>
          <path class="frame" d="M1020 279h9m-9 50h9m-9 50h9m-9 50h9m-9 50h9m-9 50h9m-9 50h9m-9 50h9m-9 50h9m-9 50h9m-9 49h9M1903 279h9m-9 50h9m-9 50h9m-9 50h9m-9 50h9m-9 50h9m-9 50h9m-9 50h9m-9 50h9m-9 50h9m-9 49h9"/>
          <path class="frame" d="M1042 245v9m100-9v9m99-9v9m100-9v9m100-9v9m100-9v9m100-9v9m100-9v9m99-9v9M1042 803v9m100-9v9m99-9v9m100-9v9m100-9v9m100-9v9m100-9v9m100-9v9m99-9v9"/>
          <path d="M1029 803l5 5h-10zM1029 611l-5-5v10z"/>
          <g class="yl"><text x="1019" y="291">0.05</text><text x="1019" y="341">0.04</text><text x="1019" y="391">0.03</text><text x="1019" y="441">0.02</text><text x="1019" y="491">0.01</text><text x="1019" y="540">0</text><text x="1019" y="590">-0.01</text><text x="1019" y="640">-0.02</text><text x="1019" y="690">-0.03</text><text x="1019" y="740">-0.04</text><text x="1019" y="790">-0.05</text></g>
          <g class="xl"><text x="1043" y="824">-0.06</text><text x="1143" y="824">-0.04</text><text x="1242" y="824">-0.02</text><text x="1342" y="824">0</text><text x="1442" y="824">0.02</text><text x="1542" y="824">0.04</text><text x="1642" y="824">0.06</text><text x="1742" y="824">0.08</text><text x="1841" y="824">0.1</text><text x="1033" y="267" class="sm">m</text><text x="1886" y="799" class="sm">m</text><text x="1343" y="799" class="r0">r=0</text></g>
          <use href="#logo" x="1877" y="258" width="22" height="20"/>
        </svg>
      </div>
    </section>
    <section class="panel messages">
      <div class="mtabs"><button class="on">消息<i>×</i></button><button>进度</button><button>日志</button><button>表格<i>×</i></button><span class="pins"><i class="caret lg"></i><svg><use href="#pin"/></svg></span></div>
      <div class="mbar"><button aria-label="清除消息"><svg class="br"><use href="#broom"/></svg></button><button class="pressed" aria-label="显示消息" aria-pressed="true"><svg><use href="#mail"/></svg></button></div>
      <div class="log"><p>COMSOL Multiphysics 6.0.0.318</p><p>[2022年8月24日 下午8:53] 打开的文件：D:\FEMPlatform\femplatform\model\simulation\model.mph</p><p>[2022年8月24日 下午8:54] 打开的文件：D:\我的坚果云\我的坚果云\过期的文档\硕士毕业设计\modelwithband.mph</p></div>
    </section>
  </div>
</main>
<footer>1.02 GB | 0.93 GB</footer>
</body>
</html>
```
FILE: styles.css
```css
* { box-sizing: border-box; margin: 0; padding: 0; }
body {
  min-height: 100vh; display: flex; flex-direction: column;
  background: #fafbff; color: #000;
  font: 15px/20px "Noto Sans", "Noto Sans CJK SC", sans-serif;
}
button { border: 0; background: none; font: inherit; color: inherit; display: flex; align-items: center; justify-content: center; flex: none; }
button:disabled { color: #b4b6b9; }
svg { width: 20px; height: 20px; flex: none; display: block; overflow: visible; }
ul { list-style: none; }
.sprite { width: 0; height: 0; position: absolute; }
.caret { display: inline-block; width: 0; height: 0; border: 3px solid transparent; border-top: 4px solid currentColor; border-bottom: 0; vertical-align: 3px; }
.caret.lg { border-width: 5px 5px 0; vertical-align: 0; }

.c-blue { color: #348ccd; }
.c-gray { color: #808080; }
.c-teal { color: #239ab8; }
.c-pale { color: #a8d6e3; }
.c-lt { color: #bdbdbd; }
.orange { color: #dd6340; }
.gray { color: #828387; }

/* title bar */
.titlebar { height: 24px; background: #fff; display: flex; align-items: center; }
.titlebar .logo { width: 18px; height: 18px; margin-left: 3px; margin-right: 12px; }
.tsep { width: 2px; height: 16px; background: #b5b5b5; flex: none; }
.quick { display: flex; margin-left: 4px; color: #b3b3b3; }
.quick button { width: 29px; height: 24px; }
.quick svg { width: 19px; height: 19px; }
.quick .more { width: 18px; color: #000; }
.titlebar h1 { font-weight: 400; font-size: 16px; line-height: 20px; padding-bottom: 2px; margin-left: 536px; white-space: nowrap; flex: 1; }
.winctl { display: flex; gap: 1px; padding-right: 3px; }
.winctl button { width: 58px; height: 24px; }
.winctl svg { width: 14px; height: 14px; fill: none; stroke: #000; stroke-width: 1; }

/* ribbon */
.tabs { height: 30px; margin: 4px 4px 0 5px; background: #ebecee; display: flex; align-items: stretch; }
.tabs a { padding: 0 12px; line-height: 30px; color: #000; text-decoration: none; }
.tabs .file { background: #348ccd; color: #fff; padding: 0 20px; margin-right: 1px; }
.tabs .on { background: #fafbff; color: #348ccd; }
.help { width: 14px; height: 14px; margin: 8px 6px 0 auto; background: #348ccd; color: #fff; font-size: 11px; line-height: 14px; border-radius: 1px; }
.ribbon { margin: 0 4px; height: 114px; border: 1px solid #d7d9dc; border-top: 0; display: flex; }
.sep { width: 1px; height: 94px; margin-top: 10px; background: #d3d5d8; flex: none; }
.group { display: flex; flex-direction: column; justify-content: space-between; flex: none; padding-bottom: 2px; }
.group p { text-align: center; color: #6c6e70; line-height: 20px; }
.tools { display: flex; align-items: flex-start; padding-top: 7px; }
.big { display: block; width: 60px; line-height: 17px; text-align: center; white-space: nowrap; }
.big svg { width: 40px; height: 40px; margin: 0 auto 2px; }
.big .caret { vertical-align: 4px; }
.nb { white-space: nowrap; }
.w62 { width: 62px; } .w68 { width: 68px; } .w78 { width: 78px; }
.g-app { width: 70px; } .g-app .tools { padding-left: 4px; }
.g-model { width: 139px; } .g-model .tools { padding-left: 6px; }
.g-def { width: 161px; } .g-def .tools { padding-left: 5px; }
.g-geo { width: 179px; } .g-geo .tools { padding-left: 12px; }
.g-mat { width: 81px; } .g-mat .tools { padding-left: 11px; }
.g-phy { width: 153px; } .g-phy .tools { padding-left: 7px; }
.g-mesh { width: 137px; } .g-mesh .tools { padding-left: 12px; }
.g-study { width: 203px; } .g-study .tools { padding-left: 7px; }
.g-res { width: 181px; } .g-res .tools { padding-left: 11px; gap: 4px; }
.g-lay { width: 137px; } .g-lay .tools { padding-left: 4px; }
.list { display: flex; flex-direction: column; align-items: flex-start; gap: 8px; padding: 1px 0 0 4px; }
.list.imp { padding-left: 8px; }
.list button { height: 20px; gap: 4px; white-space: nowrap; }
.list.imp button { gap: 1px; }
.gl { width: 17px; font-weight: 400; font-size: 14px; color: #5aa0d8; line-height: 20px; }
.gl.fx { font-size: 10px; }
.list button:disabled .gl { color: #b8cfe4; font-size: 12px; }
.gl sub { font-size: 12px; line-height: 12px; }
.ic-a { font: 34px Lato, sans-serif; fill: #1fae8f; }
.ic-p { font: 27px Roboto, sans-serif; fill: #5aa0d8; }
.ic-s { font: 12px Roboto, sans-serif; fill: #5aa0d8; }
.ic-d { font: bold 9px "DejaVu Serif", serif; fill: #333; }
.ic-e { font: 10px "Noto Sans", sans-serif; fill: #4a78ad; }

/* panels */
main { flex: 1; margin: 5px 4px 0; display: grid; grid-template-columns: 418fr 532fr 950fr; gap: 6px; }
.panel { border: 1px solid #d3d5d9; min-width: 0; display: flex; flex-direction: column; }
.panel > header { display: flex; justify-content: space-between; padding: 0 2px 0 9px; height: 40px; flex: none; }
.panel h2 { font-weight: 300; font-size: 27px; line-height: 44px; color: #2f5a9e; }
.pins { display: flex; align-items: center; gap: 5px; color: #555; height: 40px; }
.pins svg { width: 14px; height: 14px; }
.model { border-color: #8fc8f5; padding: 0 5px 10px; }
.model > header { padding: 0 0 0 4px; }
.panel.model h2 { color: #2a90e2; }
.model .pins { color: #348ccd; }
.model .pins svg { margin-right: -3px; }
.mtools { display: flex; height: 21px; margin: 0 0 6px -1px; flex: none; }
.mtools button { width: 28px; }
.mtools svg { width: 18px; height: 18px; }
.mtools .dd { width: 17px; margin-right: 4px; }
.r180 { transform: rotate(180deg); } .r90 { transform: rotate(90deg); } .r270 { transform: rotate(270deg); }
.tree { flex: 1; border: 1px solid #cfd1d4; background: #fff; }
.tree li { display: flex; align-items: center; height: 22px; white-space: pre; }
.tree li.on { background: #bfe1fd; }
.tree svg { margin-right: 7px; }
.tree em { padding-left: 7px; }
.l0 { padding-left: 7px; } .l1 { padding-left: 32px; } .l2 { padding-left: 57px; } .l3 { padding-left: 82px; }
.ar { width: 9px; height: 9px; margin-right: 9px; flex: none; }
.ar.open { background: #555; clip-path: polygon(100% 0, 100% 100%, 0 100%); }
.ar.shut { height: 12px; background: #999; clip-path: polygon(15% 0, 90% 50%, 15% 100%, 15% 0, 28% 20%, 28% 80%, 72% 50%, 28% 20%); }

.settings h3 { font-weight: 300; font-size: 18px; line-height: 30px; color: #2f5a9e; padding-left: 8px; }
.row { display: flex; align-items: center; padding: 0 6px; }
.row label { width: 46px; flex: none; }
.name { height: 28px; margin: 13px 0 11px; }
.name input { flex: 1; min-width: 0; height: 24px; border: 2px solid #d3d4d6; background: #fff; font: inherit; padding: 0 2px; }
.rep { width: 25px; height: 28px; margin-left: 11px; border: 2px solid #d3d4d6; border-radius: 3px; background: #ececee; }
.settings h4 { font-weight: 400; font-size: 17px; line-height: 32px; background: #dfe8f4; padding-left: 7px; display: flex; align-items: center; }
.fold { width: 10px; height: 6px; background: #444; clip-path: polygon(0 0, 100% 0, 50% 100%); margin-right: 15px; }
.fold.side { width: 9px; height: 12px; margin-right: 16px; background: #999; clip-path: polygon(15% 0, 90% 50%, 15% 100%, 15% 0, 28% 20%, 28% 80%, 72% 50%, 28% 20%); }
.pick { margin: 12px 0 8px; }
.pick select {
  flex: 1; height: 26px; border: 1px solid #e2e3e5; border-radius: 3px; color: #8c8d8f; opacity: 1;
  font: inherit; padding: 0 15px; appearance: none; background: #f1f2f4;
}
.bounds { display: flex; padding: 0 6px; margin-bottom: 14px; align-items: flex-start; }
.toggle { width: 48px; height: 48px; background: #9dd0fa; border: 1px solid #1c86de; border-radius: 3px; margin-right: 10px; }
.toggle svg { width: 36px; height: 20px; }
.listbox { flex: 1; display: flex; height: 150px; border: 1px solid #d3d5d8; border-bottom-width: 3px; overflow: hidden; padding: 1px 2px 1px 7px; }
.listbox ul { flex: 1; line-height: 25px; }
.sbar { width: 21px; display: flex; flex-direction: column; background: #fdfdff; border: 1px solid #f4f5f7; }
.sbar button { height: 20px; background: #f4f5f7; }
.sbar svg { width: 10px; height: 6px; fill: none; stroke: #c4c6c8; stroke-width: 2; }
.sbar .thumb { height: 12px; background: #e2e3e5; margin-bottom: auto; }
.acts { width: 80px; display: grid; grid-template-columns: 41px 39px; padding-left: 7px; grid-auto-rows: 24px; }
.acts button { height: 24px; }
.acts svg { width: 19px; height: 19px; }
.acts .navy { color: #3f6ba8; }
.sym svg { stroke: #c2c3c5; stroke-width: 2; fill: none; }

.right { display: flex; flex-direction: column; gap: 6px; min-width: 0; }
.graphics { flex: 1; }
.gtools { display: flex; height: 27px; padding: 0 4px; flex: none; }
.gtools button { width: 28px; height: 22px; }
.gtools .c-pr1 { color: #e2e2e2; } .gtools .c-pr2 { color: #bfbfbf; }
.gtools svg { width: 19px; height: 19px; }
.gtools .dd { width: 17px; margin-right: 5px; color: #111; }
.gtools .dd.off { color: #999; }
.gs { width: 1px; height: 20px; margin: 1px 5px 1px 4px; background: #d0d2d5; flex: none; }
.gtools .pressed { width: 22px; margin: 0 3px; }
.pressed { background: #9dd0fa; border: 1px solid #1c86de; border-radius: 3px; }
.plot { flex: 1; background: #fff; display: flex; }
.plot svg { width: 100%; height: auto; flex: 1; overflow: hidden; }
.dom { fill: #c8c8c8; }
.arc { fill: none; stroke: #111; stroke-width: 1; }
.frame { fill: none; stroke: #7d7d7d; stroke-width: 2; }
.wire { fill: none; stroke: #222; stroke-width: 3; }
.dots { fill: none; stroke: #000; stroke-width: 9; stroke-linecap: square; }
.yl { font: 15px "DejaVu Sans", sans-serif; text-anchor: end; }
.xl { font: 15px "DejaVu Sans", sans-serif; }
.sm { font-size: 13px; }
.r0 { fill: #999; }

.messages { padding: 6px 5px 5px; }
.mtabs { display: flex; gap: 10px; height: 32px; margin: 0 -5px; padding-left: 5px; border-bottom: 1px solid #d3d5d9; }
.mtabs button { background: #ebebeb; font-size: 17px; padding: 3px 5px 0; height: 31px; }
.mtabs .on { background: #fafbff; color: #2f5a9e; border: 1px solid #d3d5d9; border-bottom: 0; height: 32px; }
.mtabs button i { font: 24px/20px "Noto Sans", sans-serif; color: #c9cdd3; margin-left: 9px; }
.mtabs .pins { margin: 0 2px 0 auto; }
.mbar { display: flex; gap: 7px; padding: 8px 0 5px 1px; }
.mbar button { width: 22px; height: 22px; }
.mbar svg { width: 18px; height: 18px; }
.mbar .br { width: 20px; height: 22px; }
.log { border: 1px solid #d3d5d9; height: 84px; padding: 0 2px; line-height: 20px; }
footer { height: 42px; padding-top: 15px; padding-left: 1094px; border-bottom: 2px solid #1b1b1b; white-space: nowrap; }
```
